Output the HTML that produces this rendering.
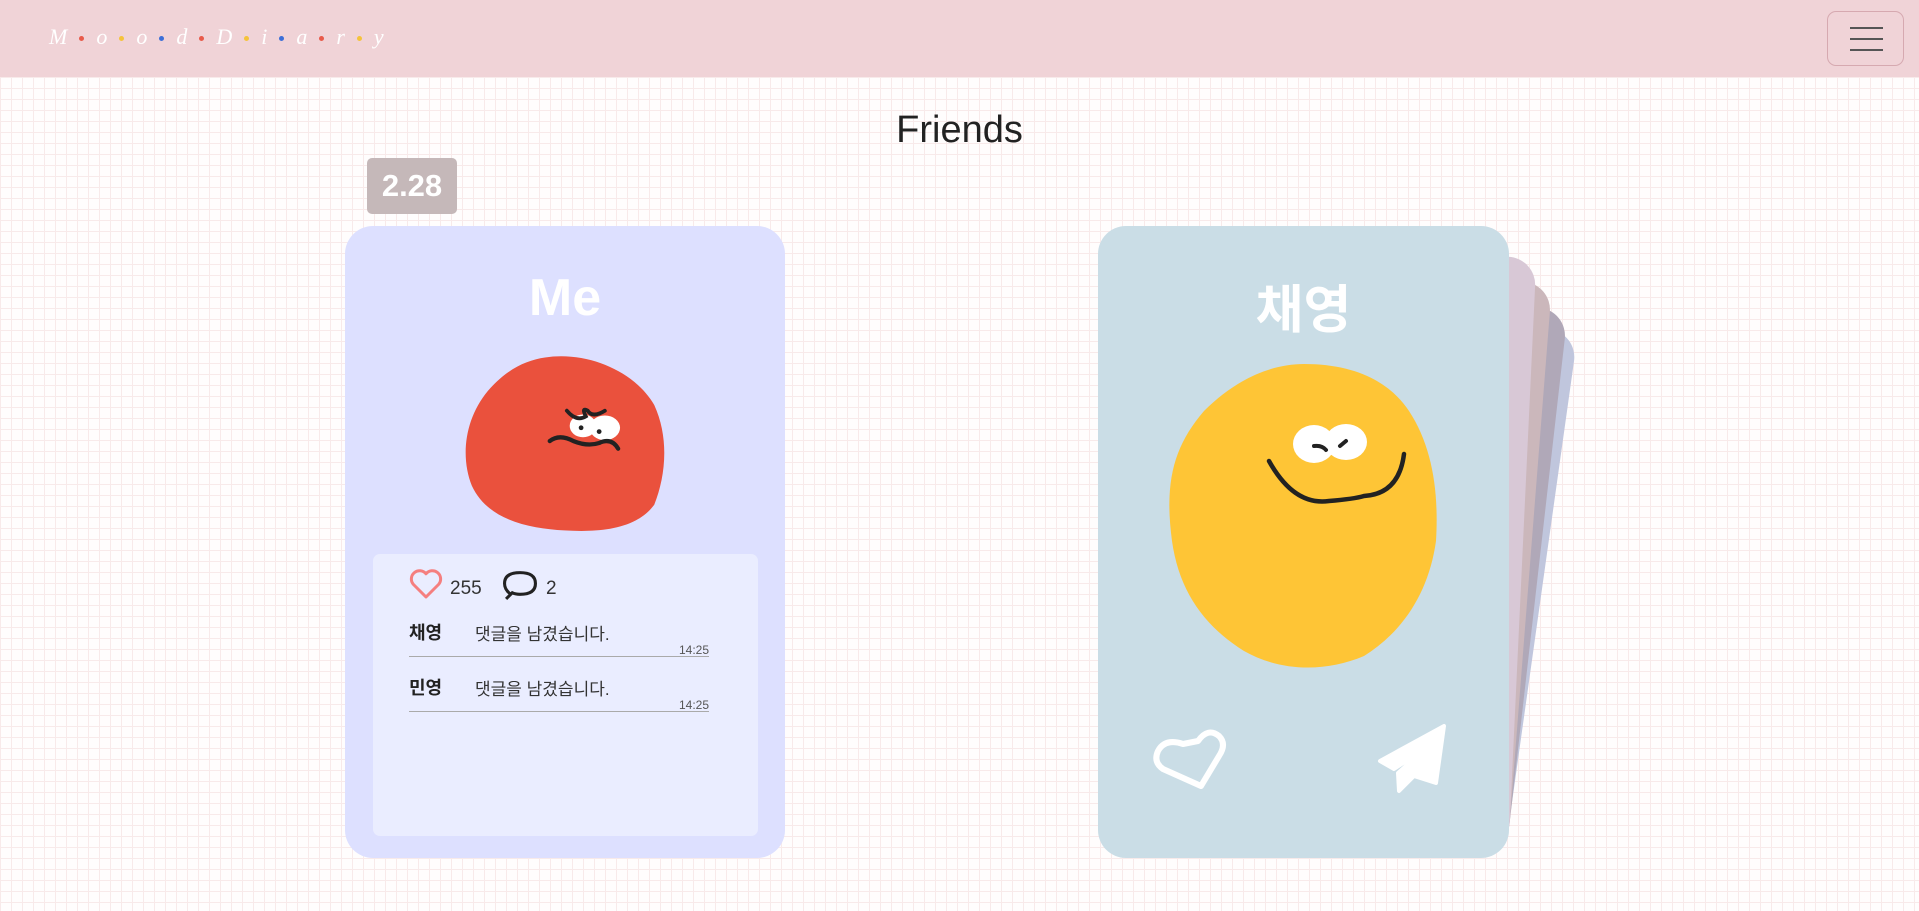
<!DOCTYPE html>
<html><head><meta charset="utf-8"><style>
*{margin:0;padding:0;box-sizing:border-box}
body{width:1919px;height:911px;overflow:hidden;font-family:"Liberation Sans","Noto Sans CJK KR",sans-serif;
background-color:#fffdfd;
background-image:linear-gradient(#f8eaea 1px,transparent 1px),linear-gradient(90deg,#f8eaea 1px,transparent 1px);
background-size:11px 11px;position:relative}
.hdr{position:absolute;left:0;top:0;width:1919px;height:77px;background:#f0d3d7}
.logo{position:absolute;left:49px;top:24px;color:#fff;font-size:22px;font-style:italic;font-family:"Liberation Serif",serif}
.logo span{display:inline-block;width:5px;height:5px;border-radius:50%;margin:0 12px;vertical-align:middle}
.hb{position:absolute;left:1827px;top:11px;width:77px;height:55px;border:1px solid #d6a9b0;border-radius:9px}
.hb i{position:absolute;left:22px;width:33px;height:2px;background:#555}
h1{position:absolute;left:0;width:1919px;top:109px;text-align:center;font-size:38px;font-weight:normal;color:#222}
.badge{position:absolute;left:367px;top:158px;width:90px;height:56px;background:#c5b8b9;border-radius:5px;color:#fff;font-weight:bold;font-size:31px;text-align:center;line-height:56px}
.card{position:absolute;border-radius:28px}
.me{left:345px;top:226px;width:440px;height:632px;background:#dde0ff}
.ct{position:absolute;width:100%;text-align:center;color:#fff;font-weight:bold}
.box{position:absolute;left:28px;top:328px;width:385px;height:282px;background:#eaedff;border-radius:7px}
.row{position:absolute;left:36px;width:300px;height:40px;border-bottom:1px solid #aaa;font-size:17px;color:#333}
.row b{position:absolute;left:0;top:2px;font-size:18px;color:#222}
.row span{position:absolute;left:66px;top:3px}
.row em{position:absolute;right:0;bottom:-1px;font-style:normal;font-size:12px;color:#555}
.fr{left:1098px;top:226px;width:411px;height:632px;background:#cadde6}
.back{position:absolute;left:1098px;width:411px;border-radius:28px;transform-origin:0 100%}
</style></head><body>
<div class="hdr">
<div class="logo">M<span style="background:#e85a4a"></span>o<span style="background:#f5c33b"></span>o<span style="background:#3c6fd8"></span>d<span style="background:#e85a4a"></span>D<span style="background:#f5c33b"></span>i<span style="background:#3c6fd8"></span>a<span style="background:#e85a4a"></span>r<span style="background:#f5c33b"></span>y</div>
<div class="hb"><i style="top:15px"></i><i style="top:26px"></i><i style="top:37px"></i></div>
</div>
<h1>Friends</h1>
<div class="badge">2.28</div>

<div class="card me">
<div class="ct" style="top:42px;font-size:52px">Me</div>
<svg style="position:absolute;left:104px;top:122px" width="230" height="190" viewBox="0 0 230 200">
<path d="M95 10 C140 3 190 25 210 60 C226 95 222 135 210 165 C190 192 150 194 115 192 C80 190 35 182 18 145 C6 115 10 75 35 45 C55 22 75 13 95 10Z" fill="#ea513d"/>
<ellipse cx="135" cy="82" rx="14" ry="12" fill="#fff"/><ellipse cx="158" cy="84" rx="16" ry="13" fill="#fff"/>
<circle cx="133" cy="84" r="2.5" fill="#222"/><circle cx="152" cy="88" r="2.5" fill="#222"/>
<path d="M118 66 Q128 78 138 72 Q133 62 140 66 Q145 74 158 66" stroke="#222" stroke-width="4" fill="none" stroke-linecap="round"/>
<path d="M100 98 Q110 90 125 98 Q140 104 152 100 Q165 94 172 106" stroke="#222" stroke-width="4.5" fill="none" stroke-linecap="round"/>
</svg>
<div class="box">
<svg style="position:absolute;left:34px;top:13px" width="38" height="33" viewBox="0 0 24 22"><path d="M12 20 L3.5 11.5 A5 5 0 0 1 12 4.5 A5 5 0 0 1 20.5 11.5Z" fill="none" stroke="#f57f7f" stroke-width="2" stroke-linejoin="round"/></svg>
<div style="position:absolute;left:77px;top:24px;font-size:19px;color:#333">255</div>
<svg style="position:absolute;left:128px;top:14px" width="38" height="34" viewBox="0 0 24 22"><path d="M6 17 Q2 14 2 10 Q2 3 12 3 Q22 3 22 10 Q22 17 12 17 Q9 17 7 16 L3 20 Q5 18 6 17Z" fill="none" stroke="#222" stroke-width="2"/></svg>
<div style="position:absolute;left:173px;top:24px;font-size:19px;color:#333">2</div>
<div class="row" style="top:63px"><b>채영</b><span>댓글을 남겼습니다.</span><em>14:25</em></div>
<div class="row" style="top:118px"><b>민영</b><span>댓글을 남겼습니다.</span><em>14:25</em></div>
</div>
</div>

<div class="back" style="background:#c0c6dd;top:271px;height:524px;transform:rotate(8deg)"></div>
<div class="back" style="background:#b0a8b8;top:261px;height:544px;transform:rotate(6.5deg)"></div>
<div class="back" style="background:#cbb7bb;top:250px;height:565px;transform:rotate(4.5deg)"></div>
<div class="back" style="background:#d8c8d6;top:238px;height:592px;transform:rotate(2.7deg)"></div>
<div class="card fr">
<div class="ct" style="top:42px;font-size:52px">채영</div>
<svg style="position:absolute;left:66px;top:135px" width="280" height="310" viewBox="0 0 280 310">
<path d="M140 3 C190 3 225 20 245 50 C268 85 275 130 272 180 C265 230 240 270 200 295 C160 312 115 310 80 290 C40 265 15 230 8 180 C0 120 10 85 40 50 C70 20 105 3 140 3Z" fill="#fec536"/>
<ellipse cx="150" cy="83" rx="21" ry="19" fill="#fff"/><ellipse cx="182" cy="81" rx="21" ry="18" fill="#fff"/>
<path d="M150 85 Q158 84 162 89" stroke="#222" stroke-width="4" fill="none" stroke-linecap="round"/>
<path d="M176 85 L182 80" stroke="#222" stroke-width="4" fill="none" stroke-linecap="round"/>
<path d="M105 100 Q130 145 165 140 Q190 138 200 135 Q235 133 240 93" stroke="#222" stroke-width="4.5" fill="none" stroke-linecap="round"/>
</svg>
<svg style="position:absolute;left:55px;top:498px" width="75" height="70" viewBox="0 0 75 70"><path d="M45 17 Q55 3 66 12 Q74 20 66 32 L48 62 L10 45 Q0 38 5 27 Q12 14 30 20 Z" fill="none" stroke="#fff" stroke-width="6" stroke-linejoin="round"/></svg>
<svg style="position:absolute;left:278px;top:497px" width="76" height="72" viewBox="0 0 76 72"><path d="M68 3 L60 60 L38 53 L23 68 L22 50 L50 25 L18 46 L4 38 Z" fill="#fff" stroke="#fff" stroke-width="4" stroke-linejoin="round"/></svg>
</div>
</body></html>
